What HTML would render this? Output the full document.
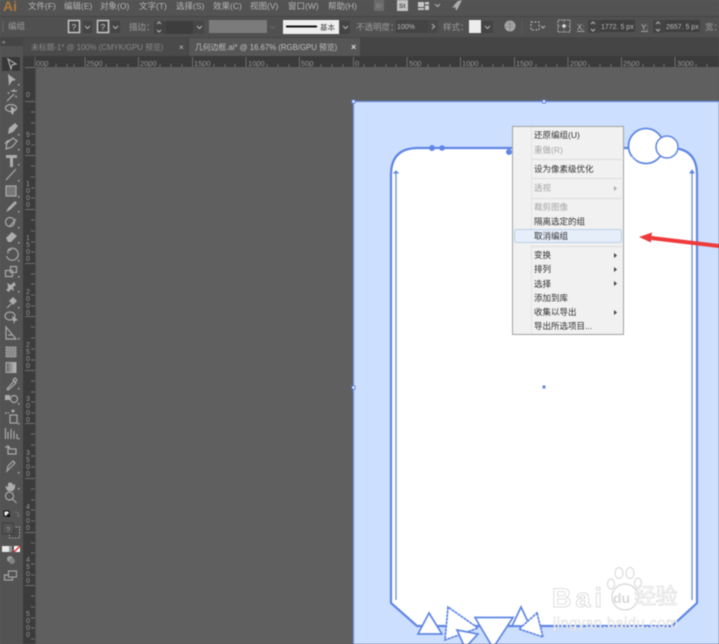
<!DOCTYPE html>
<html lang="zh">
<head>
<meta charset="utf-8">
<style>
html,body{margin:0;padding:0;background:#5f5f5f;width:719px;height:644px;overflow:hidden}
svg{display:block;filter:blur(.6px)}
text{font-family:"Liberation Sans","Noto Sans CJK SC",sans-serif}
.m{font-size:8.5px;fill:#b6b6b6}
.c{font-size:8.5px;fill:#9c9c9c}
.r{font-size:7.5px;fill:#969696}
.v{font-size:7px;fill:#969696;text-anchor:middle}
.i{font-size:8.5px;fill:#303030}
.d{font-size:8.5px;fill:#a5a5a5}
.ic{fill:none;stroke:#aaaaaa;stroke-width:1.2}
.if{fill:#adadad}
</style>
</head>
<body>
<svg width="719" height="644" viewBox="0 0 719 644" xmlns="http://www.w3.org/2000/svg">
<!-- backgrounds -->
<rect width="719" height="644" fill="#5f5f5f"/>
<rect width="719" height="17" fill="#535353"/>
<rect y="17" width="719" height="20" fill="#505050"/>
<rect y="37" width="719" height="19" fill="#454545"/>
<rect x="23" y="56" width="696" height="11" fill="#3b3b3b"/>
<rect x="23" y="56" width="12" height="588" fill="#3b3b3b"/>
<rect x="0" y="37" width="23" height="607" fill="#535353"/>
<rect x="0" y="37" width="23" height="9" fill="#454545"/>

<!-- menu bar -->
<text x="3" y="11" font-size="14" font-weight="700" fill="#b0783c">Ai</text>
<text class="m" x="28" y="9">文件(F)</text>
<text class="m" x="64" y="9">编辑(E)</text>
<text class="m" x="100" y="9">对象(O)</text>
<text class="m" x="139" y="9">文字(T)</text>
<text class="m" x="176" y="9">选择(S)</text>
<text class="m" x="213" y="9">效果(C)</text>
<text class="m" x="250" y="9">视图(V)</text>
<text class="m" x="288" y="9">窗口(W)</text>
<text class="m" x="328" y="9">帮助(H)</text>
<rect x="374" y="0" width="10" height="11" fill="#6b6b6b"/>
<text x="376" y="8" font-size="6.5" fill="#8c8c8c">Br</text>
<rect x="397" y="0" width="11" height="11" fill="#c4c4c4"/>
<text x="399" y="8" font-size="6.5" font-weight="700" fill="#555">St</text>
<path d="M418 2h6v5h-6zM418 8h6v2h-6zM425 2h4v2.500h-4zM425 5.500h4v4.500h-4z" fill="#c8c8c8"/>
<path d="M435 4l2.500 2.500 2.500-2.500" class="ic"/>
<path d="M462 0l-3 6-2 4-1 0-1-3-3 1 3-4 3-3z" fill="#adadad"/>
<path d="M0 16.500h719" stroke="#444" stroke-width="1"/>

<!-- control bar -->
<path d="M3 21v11" stroke="#696969"/>
<text class="c" x="8" y="29">编组</text>
<rect x="68.500" y="20.500" width="11" height="12" fill="#444" stroke="#c8c8c8" stroke-width="1.500"/>
<text x="71.500" y="30" font-size="8.500" fill="#ccc">?</text>
<rect x="83" y="21" width="9" height="12" fill="#444"/>
<path d="M85 26l2.500 2.500 2.500-2.500" class="ic" stroke-width="1"/>
<rect x="97.500" y="20.500" width="11" height="12" fill="#444" stroke="#c8c8c8" stroke-width="1.500"/>
<text x="100.500" y="30" font-size="8.500" fill="#ccc">?</text>
<rect x="111" y="21" width="9" height="12" fill="#444"/>
<path d="M113 26l2.500 2.500 2.500-2.500" class="ic" stroke-width="1"/>
<text class="c" x="129" y="30">描边：</text>
<rect x="154" y="21" width="12" height="13" fill="#444"/>
<path d="M157 24l2-2 2 2M157 30l2 2 2-2" class="ic" stroke-width="1"/>
<rect x="166" y="21" width="27" height="13" fill="#3d3d3d"/>
<rect x="193" y="21" width="11" height="13" fill="#474747"/>
<path d="M197 26l2.500 2.500 2.500-2.500" class="ic" stroke-width="1"/>
<rect x="209" y="20" width="58" height="13" fill="#7b7b7b"/>
<path d="M270 26l2.500 2.500 2.500-2.500" stroke="#666" fill="none"/>
<rect x="283" y="20" width="56" height="14" fill="#efefef"/>
<rect x="286" y="25.500" width="31" height="2" fill="#111"/>
<text x="320" y="30" font-size="7.500" fill="#444">基本</text>
<rect x="340" y="21" width="10" height="13" fill="#444"/>
<path d="M343 26l2.500 2.500 2.500-2.500" class="ic" stroke-width="1"/>
<text class="c" x="356" y="30">不透明度：</text>
<rect x="396" y="20" width="32" height="13" fill="#444"/>
<text x="397" y="29" font-size="7" fill="#bbb">100%</text>
<rect x="428" y="20" width="10" height="13" fill="#484848"/>
<path d="M432 24l2.500 2.500-2.500 2.500" class="ic" stroke-width="1"/>
<text class="c" x="443" y="30">样式：</text>
<rect x="469" y="20" width="12" height="13" fill="#ececec"/>
<rect x="481" y="21" width="12" height="12" fill="#444"/>
<path d="M485 26l2.500 2.500 2.500-2.500" class="ic" stroke-width="1"/>
<circle cx="510" cy="26" r="5.500" fill="#a8a8a8"/>
<path d="M506 24h8M505 27h10M510 21v10" stroke="#777" stroke-width=".6"/>
<path d="M522 20v14" stroke="#5b5b5b"/>
<rect x="531" y="22" width="8" height="8" fill="none" stroke="#b8b8b8" stroke-dasharray="2 1.500"/>
<path d="M541 26l2 2 2-2" stroke="#b8b8b8" fill="none"/>
<rect x="558" y="20" width="12" height="12" fill="none" stroke="#b0b0b0" stroke-dasharray="2 1"/>
<path d="M558 26h12M564 20v12" stroke="#8f8f8f" stroke-dasharray="2 1.500"/>
<rect x="562.500" y="24.500" width="3" height="3" fill="#ddd"/>
<text x="577" y="30" font-size="8" fill="#b5b5b5" text-decoration="underline">X:</text>
<rect x="588" y="20" width="12" height="13" fill="#444"/>
<path d="M591 24l2-2 2 2M591 29l2 2 2-2" class="ic" stroke-width="1"/>
<rect x="600" y="20" width="35" height="12" fill="#3f3f3f"/>
<text x="601" y="29" font-size="7" fill="#bbb">1772. 5 px</text>
<text x="641" y="30" font-size="8" fill="#b5b5b5" text-decoration="underline">Y:</text>
<rect x="653" y="20" width="12" height="13" fill="#444"/>
<path d="M656 24l2-2 2 2M656 29l2 2 2-2" class="ic" stroke-width="1"/>
<rect x="665" y="20" width="35" height="12" fill="#3f3f3f"/>
<text x="666" y="29" font-size="7" fill="#bbb">2657. 5 px</text>
<text class="c" x="705" y="30">宽：</text>

<!-- tabs -->
<rect x="23" y="38" width="164" height="18" fill="#4a4a4a"/>
<text x="31" y="50" font-size="7.800" fill="#8a8a8a">未标题-1* @ 100% (CMYK/GPU 预览)</text>
<text x="179" y="50" font-size="8" fill="#c8c8c8">×</text>
<rect x="189" y="38" width="171" height="18" fill="#565656"/>
<text x="195" y="50" font-size="7.800" fill="#c0c0c0">几何边框.ai* @ 16.67% (RGB/GPU 预览)</text>
<text x="351" y="50" font-size="9" font-weight="700" fill="#ddd">×</text>
<text x="2" y="44" font-size="6" fill="#bbb">»</text>

<!-- horizontal ruler -->
<g stroke="#6e6e6e" stroke-width="1">
<path d="M35 57v10M85 57v10M138.500 57v10M192.500 57v10M246 57v10M299.500 57v10M353.500 57v10M407 57v10M460.500 57v10M514.500 57v10M568 57v10M621.500 57v10M675 57v10"/>
<path d="M45 64v3M56 64v3M67 64v3M74 64v3M96 64v3M106 64v3M117 64v3M128 64v3M149 64v3M160 64v3M171 64v3M182 64v3M203 64v3M214 64v3M225 64v3M235 64v3M257 64v3M267 64v3M278 64v3M289 64v3M310 64v3M321 64v3M332 64v3M343 64v3M364 64v3M375 64v3M386 64v3M396 64v3M418 64v3M428 64v3M439 64v3M450 64v3M471 64v3M482 64v3M493 64v3M503 64v3M525 64v3M536 64v3M546 64v3M557 64v3M579 64v3M589 64v3M600 64v3M611 64v3M632 64v3M643 64v3M654 64v3M664 64v3M686 64v3M696 64v3M707 64v3"/>
</g>
<text class="r" x="36" y="66">000</text>
<text class="r" x="86" y="66">2500</text>
<text class="r" x="140" y="66">2000</text>
<text class="r" x="194" y="66">1500</text>
<text class="r" x="248" y="66">1000</text>
<text class="r" x="301" y="66">500</text>
<text class="r" x="355" y="66">0</text>
<text class="r" x="409" y="66">500</text>
<text class="r" x="462" y="66">1000</text>
<text class="r" x="516" y="66">1500</text>
<text class="r" x="570" y="66">2000</text>
<text class="r" x="623" y="66">2500</text>
<text class="r" x="677" y="66">3000</text>

<!-- vertical ruler -->
<path d="M35.500 56v588" stroke="#4a4a4a"/>
<g stroke="#6e6e6e" stroke-width="1">
<path d="M25 101.500h10M25 155.500h10M25 209.500h10M25 263.500h10M25 316.500h10M25 370.500h10M25 423.500h10M25 478.500h10M25 532.500h10M25 585.500h10"/>
<path d="M31 112h4M31 123h4M31 134h4M31 145h4M31 166h4M31 177h4M31 188h4M31 198h4M31 220h4M31 231h4M31 242h4M31 252h4M31 274h4M31 284h4M31 295h4M31 306h4M31 327h4M31 338h4M31 349h4M31 360h4M31 381h4M31 392h4M31 402h4M31 413h4M31 434h4M31 445h4M31 456h4M31 467h4M31 489h4M31 500h4M31 510h4M31 521h4M31 543h4M31 553h4M31 564h4M31 575h4M31 596h4M31 607h4M31 618h4M31 628h4M31 639h4"/>
<path d="M25 67.500h10"/>
</g>
<text class="v" x="28" y="97">0</text>
<g class="v">
<text class="v" x="28" y="137">5</text><text class="v" x="28" y="145">0</text><text class="v" x="28" y="153">0</text>
<text class="v" x="28" y="186">1</text><text class="v" x="28" y="193">0</text><text class="v" x="28" y="200">0</text><text class="v" x="28" y="207">0</text>
<text class="v" x="28" y="240">1</text><text class="v" x="28" y="247">5</text><text class="v" x="28" y="254">0</text><text class="v" x="28" y="261">0</text>
<text class="v" x="28" y="294">2</text><text class="v" x="28" y="301">0</text><text class="v" x="28" y="308">0</text><text class="v" x="28" y="315">0</text>
<text class="v" x="28" y="347">2</text><text class="v" x="28" y="354">5</text><text class="v" x="28" y="361">0</text><text class="v" x="28" y="368">0</text>
<text class="v" x="28" y="401">3</text><text class="v" x="28" y="408">0</text><text class="v" x="28" y="415">0</text><text class="v" x="28" y="422">0</text>
<text class="v" x="28" y="455">3</text><text class="v" x="28" y="462">5</text><text class="v" x="28" y="469">0</text><text class="v" x="28" y="476">0</text>
<text class="v" x="28" y="509">4</text><text class="v" x="28" y="516">0</text><text class="v" x="28" y="523">0</text><text class="v" x="28" y="530">0</text>
<text class="v" x="28" y="562">4</text><text class="v" x="28" y="569">5</text><text class="v" x="28" y="576">0</text><text class="v" x="28" y="583">0</text>
<text class="v" x="28" y="616">5</text><text class="v" x="28" y="623">0</text><text class="v" x="28" y="630">0</text><text class="v" x="28" y="637">0</text>
</g>

<!-- tool icons -->
<rect x="2" y="57" width="18" height="14" rx="1" fill="#383838"/>
<path d="M8 59l8 5-4 1-1 4z" class="ic"/>
<path d="M8 74l8 6-4 1-3 5z" class="if"/><rect x="18" y="84" width="1.500" height="1.500" class="if"/>
<path d="M7 101l7-7" class="ic" stroke-width="1.500"/><path d="M14 89v3M11 91h6M8 92l1 2M15 96l2 1" class="ic" stroke-width="1"/>
<ellipse cx="11" cy="108" rx="5.500" ry="3.500" class="ic"/><path d="M11 106l5 4-2 1-1 4-2-2z" class="if"/>
<path d="M8 134l1-6 6-5 3 3-5 6z" class="if"/><rect x="18" y="134" width="1.500" height="1.500" class="if"/>
<path d="M6 149l1-6 6-5 4 3-5 6zM5 144c1-2 2-3 4-4" class="ic"/><rect x="18" y="149" width="1.500" height="1.500" class="if"/>
<path d="M6 155h11v3h-4v9h-3v-9h-4z" class="if"/><rect x="18" y="164" width="1.500" height="1.500" class="if"/>
<path d="M6 180l10-11" class="ic"/><rect x="18" y="180" width="1.500" height="1.500" class="if"/>
<rect x="6" y="186" width="10" height="10" fill="#777" stroke="#aaa" stroke-width="1.200"/><rect x="18" y="196" width="1.500" height="1.500" class="if"/>
<path d="M6 212l2-4 7-7 2 2-7 7z" class="if"/><rect x="18" y="211" width="1.500" height="1.500" class="if"/>
<circle cx="10" cy="222" r="4.500" class="ic"/><path d="M9 227l7-8" class="ic" stroke-width="1.600"/><rect x="18" y="227" width="1.500" height="1.500" class="if"/>
<path d="M6 238l6-6 5 4-6 6h-3z" class="if"/><rect x="18" y="242" width="1.500" height="1.500" class="if"/>
<path d="M8 250a6 6 0 1 1-1.500 6M8 250v3.500M8 250h3.500" class="ic"/><rect x="18" y="260" width="1.500" height="1.500" class="if"/>
<rect x="5.500" y="270.500" width="7" height="6" class="ic"/><rect x="10.500" y="266.500" width="6" height="6" class="ic"/><rect x="18" y="276" width="1.500" height="1.500" class="if"/>
<path d="M6 290c3-2 2-4 1-7l4 2 3-3 2 3-3 2 1 4-3-2-2 3z" class="if"/><rect x="18" y="291" width="1.500" height="1.500" class="if"/>
<path d="M9 301l4-4 4 4-4 4z" class="if"/><path d="M7 308l4-4" class="ic"/><rect x="18" y="307" width="1.500" height="1.500" class="if"/>
<ellipse cx="10" cy="316" rx="5" ry="4" class="ic" stroke-width="1"/><path d="M12 316l6 4-3 1-1 3z" class="if"/>
<path d="M6 339v-12l10 12z" class="ic"/><path d="M8 335h4" class="ic" stroke-width="1"/><rect x="18" y="338" width="1.500" height="1.500" class="if"/>
<rect x="6" y="347" width="10" height="10" fill="#8c8c8c" stroke="#aaa" stroke-dasharray="2 1"/>
<defs><linearGradient id="g"><stop offset="0" stop-color="#666"/><stop offset="1" stop-color="#c0c0c0"/></linearGradient></defs>
<rect x="6" y="362.500" width="10" height="10" fill="url(#g)" stroke="#aaa"/>
<path d="M7 389l7-8 2 2-8 7zM13 380l2-2 2 2-2 2z" class="ic" stroke-width="1.100"/><rect x="18" y="388" width="1.500" height="1.500" class="if"/>
<rect x="5" y="395" width="5" height="5" class="if"/><circle cx="14" cy="399" r="3.500" class="ic"/><rect x="18" y="403" width="1.500" height="1.500" class="if"/>
<rect x="10" y="415" width="7" height="8" class="ic" stroke-width="1.100"/><circle cx="13" cy="411" r="1.500" class="if"/><path d="M5 413h2M8 413h1" class="ic"/><rect x="18" y="423" width="1.500" height="1.500" class="if"/>
<path d="M5.500 428v11M8 432v7M11 429v10M14 431v8M17 434v5" class="ic" stroke-width="1.500"/><rect x="18" y="438" width="1.500" height="1.500" class="if"/>
<path d="M8 447v7h8v-5h-6l-2-2M5 447h5M8 445v3" class="ic" stroke-width="1.100"/>
<path d="M7 471l1-5 5-5 2 2-5 5z" class="ic"/><rect x="18" y="472" width="1.500" height="1.500" class="if"/>
<path d="M8 491c-2-2-3-4-2-5l2 1v-4h1l1-1 1 1 1 0 1 2 2-1v4l-2 3z" class="if"/><rect x="18" y="488" width="1.500" height="1.500" class="if"/>
<circle cx="9.500" cy="496" r="4" class="ic"/><path d="M12.500 499l4 4" class="ic" stroke-width="1.500"/>
<!-- fill/stroke -->
<rect x="4" y="511" width="5" height="5" fill="#eee" stroke="#111"/><rect x="7" y="514" width="3" height="3" fill="#111"/>
<path d="M15 512c2 0 4 1 4 4M17 515l2 2" stroke="#707070" fill="none"/>
<rect x="9.500" y="527" width="10" height="11" fill="#4a4a4a" stroke="#999" stroke-dasharray="2 1"/>
<rect x="2.500" y="523" width="11" height="11" fill="#545454" stroke="#3c3c3c" stroke-width="1"/>
<text x="6" y="532" font-size="7.500" fill="#999">?</text>
<rect x="2" y="546" width="10" height="6" fill="#e8e8e8"/><rect x="9" y="546" width="3" height="6" fill="#999"/>
<rect x="14" y="546" width="6" height="6" fill="#fff"/><path d="M14 552l6-6" stroke="#e0302a" stroke-width="1.500"/>
<circle cx="10" cy="559" r="3" fill="#a0a0a0"/><circle cx="12" cy="561" r="3" fill="#848484"/>
<rect x="4.500" y="575" width="8" height="5" class="ic" stroke-width="1"/><rect x="8.500" y="571" width="8" height="6" fill="#535353" stroke="#aaa" stroke-width="1"/>

<!-- artboard -->
<rect x="353.500" y="101.500" width="366" height="543" fill="#cddfff" stroke="#6a8ee0" stroke-width="1.200"/>

<!-- frame -->
<path d="M391 603V175Q391 148 418 148H670Q697 148 697 175V603L672 626H417Z" fill="#fff" stroke="#5f86e4" stroke-width="2.200"/>
<path d="M396 173V600M692 173V600" stroke="#5f86e4" stroke-width="1.200" fill="none"/>
<path d="M394 173h4l-2-2zM690 173h4l-2-3z" fill="#5f86e4" stroke="#5f86e4"/>
<circle cx="432" cy="148" r="3" fill="#5f86e4"/>
<circle cx="442" cy="148" r="2.800" fill="#5f86e4"/>
<circle cx="509" cy="152" r="3" fill="#5f86e4"/>
<circle cx="646" cy="146" r="17.500" fill="#fff" stroke="#5f86e4" stroke-width="1.800"/>
<path d="M632 157a17.500 17.500 0 0 0 30 0" fill="none" stroke="#fff" stroke-width="1" stroke-dasharray="1.500 1.500"/>
<circle cx="667" cy="147" r="11" fill="#fff" stroke="#5f86e4" stroke-width="1.500"/>

<!-- triangles -->
<g fill="#fff" stroke="#5f86e4" stroke-width="1.700" stroke-linejoin="miter">
<path d="M429 613L418 634H442Z"/>
<path d="M448 607L445 640L478 628Z" stroke-dasharray="3 .6"/>
<path d="M457 630L478 634L465 648Z"/>
<path d="M475 617.500H513L493 648Z"/>
<path d="M521 607L512 626H530Z"/>
<path d="M537 613L543 637L519 629Z" stroke-dasharray="3 .6"/>
</g>

<!-- handles -->
<g fill="#fff" stroke="#5f86e4" stroke-width="1">
<rect x="352" y="100" width="3" height="3"/>
<rect x="542.500" y="100" width="3" height="3"/>
<rect x="352" y="386" width="3" height="3"/>
</g>
<rect x="542.500" y="385.500" width="3" height="3" fill="#5f86e4"/>

<!-- watermark -->
<g>
<text x="552" y="607" font-size="27" font-weight="700" fill="#fff" stroke="#d6d6d6" stroke-width=".8" textLength="50">Bai</text>
<circle cx="625" cy="597" r="13" fill="#fff" stroke="#d6d6d6" stroke-width="1.200"/>
<text x="613" y="603" font-size="14" font-weight="700" fill="#d8d8d8">du</text>
<ellipse cx="611" cy="584" rx="3.500" ry="5" fill="#fff" stroke="#d6d6d6"/>
<ellipse cx="619" cy="573" rx="4" ry="5.500" fill="#fff" stroke="#d6d6d6"/>
<ellipse cx="630" cy="573" rx="4" ry="5.500" fill="#fff" stroke="#d6d6d6"/>
<ellipse cx="638" cy="583" rx="3.500" ry="5" fill="#fff" stroke="#d6d6d6"/>
<text x="634" y="604" font-size="22" fill="#fff" stroke="#d6d6d6" stroke-width=".6" letter-spacing="-.5">经验</text>
<text x="553" y="628" font-size="14.500" fill="#f4f4f4" stroke="#d8d8d8" stroke-width=".4" textLength="125">jingyan.baidu.com</text>
</g>

<!-- context menu -->
<rect x="512.500" y="126.500" width="111" height="208" fill="#f1f1f1" stroke="#a2a2a2"/>
<path d="M531.500 127v207" stroke="#e4e4e4"/>
<path d="M532 159.500h90M532 178.500h90M532 198.500h90M532 246.500h90" stroke="#dcdcdc"/>
<rect x="514.500" y="229.500" width="107" height="13" rx="2" fill="#e6eefa" stroke="#b8cfe8"/>
<text class="i" x="534" y="138">还原编组(U)</text>
<text class="d" x="534" y="153">重做(R)</text>
<text class="i" x="534" y="172">设为像素级优化</text>
<text class="d" x="534" y="191">透视</text>
<text class="d" x="534" y="210">裁剪图像</text>
<text class="i" x="534" y="224.500">隔离选定的组</text>
<text class="i" x="534" y="239">取消编组</text>
<text class="i" x="534" y="258">变换</text>
<text class="i" x="534" y="272">排列</text>
<text class="i" x="534" y="287">选择</text>
<text class="i" x="534" y="301">添加到库</text>
<text class="i" x="534" y="315">收集以导出</text>
<text class="i" x="534" y="329">导出所选项目...</text>
<path d="M614 186l3 2.500-3 2.500z" fill="#aaa"/>
<path d="M614 253l3 2.500-3 2.500zM614 267l3 2.500-3 2.500zM614 281l3 2.500-3 2.500zM614 310l3 2.500-3 2.500z" fill="#444"/>

<!-- red arrow -->
<path d="M639 237L652 232.500L651.500 236L719 244V248L651 240L651 242.500Z" fill="#ee3a3a"/>
</svg>
</body>
</html>
